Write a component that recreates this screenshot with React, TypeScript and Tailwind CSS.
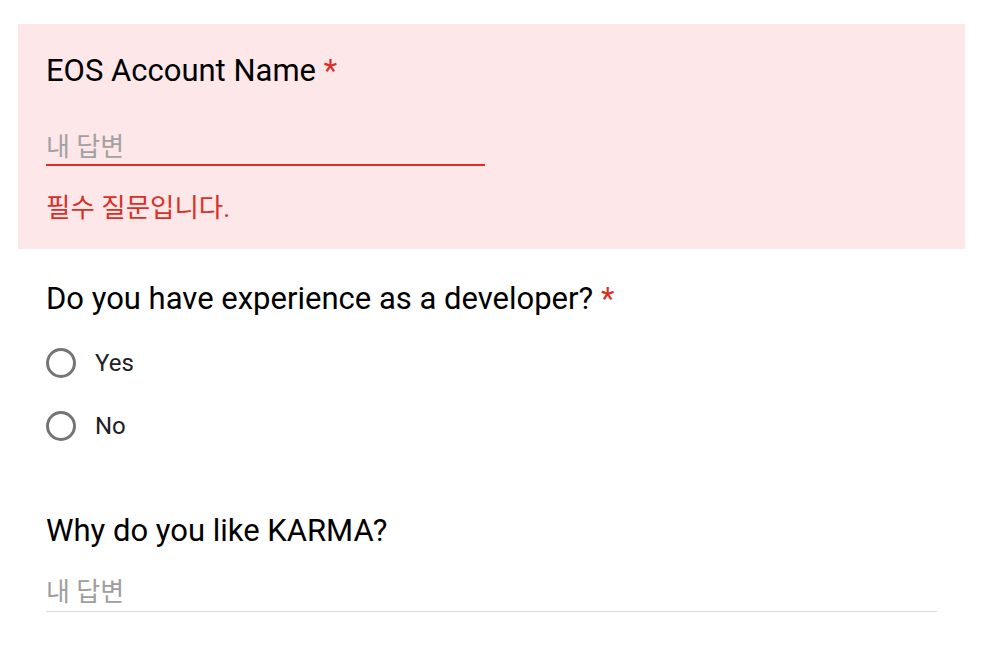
const font = "font-['Roboto','Noto_Sans_CJK_KR',sans-serif]";

function Radio({ label }: { label: string }) {
  return (
    <label className="flex h-[63px] items-center gap-[19px]">
      <span className="box-border h-[30px] w-[30px] rounded-full border-[3px] border-[#757575]" />
      <span className="text-[24px] text-[#202124]">{label}</span>
    </label>
  );
}

export default function App() {
  return (
    <div className={`${font} min-h-screen bg-white pl-[18px] pr-[22px] pt-6 text-black`}>
      {/* required question, error state */}
      <section className="bg-[#fde7e9] pb-[25px] pl-7 pr-7 pt-7">
        <h2 className="text-[31px] leading-[37px]">
          EOS Account Name <span className="text-[#d93025]">*</span>
        </h2>
        <div className="mt-[42px] w-[439px] border-b-2 border-[#d93025] pb-px text-[26px] leading-[32px] text-[#a3a0a1]">
          내 답변
        </div>
        <p className="mt-[26px] text-[26.5px] leading-[32px] text-[#d93025]">필수 질문입니다.</p>
      </section>

      <section className="px-7 pt-[31px]">
        <h2 className="text-[31px] leading-[37px]">
          Do you have experience as a developer? <span className="text-[#d93025]">*</span>
        </h2>
        <div className="mt-[14px] flex flex-col">
          <Radio label="Yes" />
          <Radio label="No" />
        </div>
      </section>

      <section className="px-7 pt-[55px]">
        <h2 className="text-[31px] leading-[37px]">Why do you like KARMA?</h2>
        <div className="mt-[27px] border-b border-[#dadce0] pb-[3px] text-[26px] leading-[32px] text-[#9e9e9e]">
          내 답변
        </div>
      </section>
    </div>
  );
}
